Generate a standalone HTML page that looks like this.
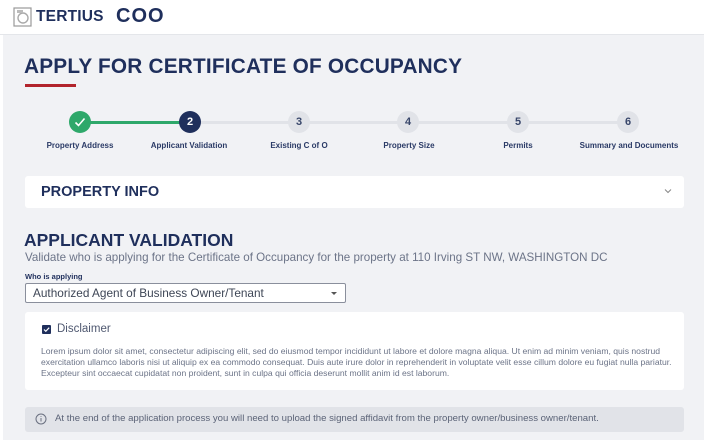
<!DOCTYPE html>
<html><head><meta charset="utf-8"><style>
*{margin:0;padding:0;box-sizing:border-box}
body{width:704px;height:440px;overflow:hidden;background:#fff;font-family:"Liberation Sans",sans-serif;position:relative}
.hdr{position:absolute;left:0;top:0;width:704px;height:35px;background:#fff;border-bottom:1px solid #e4e6ea}
.main{position:absolute;left:3px;top:35px;width:701px;height:405px;background:#f1f2f5}
.abs{position:absolute;white-space:nowrap}
.navy{color:#1f2f5c}
.circ{position:absolute;width:22px;height:22px;border-radius:50%;top:111px;text-align:center;line-height:22px;font-size:11px;font-weight:bold}
.grey{background:#e1e3e8;color:#39476b}
.lbl{position:absolute;top:141px;font-size:8px;font-weight:bold;color:#2a3a66;text-align:center;width:140px}
.card{position:absolute;background:#fff;border-radius:3px}
</style></head><body>
<div class="hdr"></div>
<svg class="abs" style="left:13px;top:7px" width="19" height="20" viewBox="0 0 19 20"><rect x="1" y="1" width="17" height="18" fill="none" stroke="#999" stroke-width="1.2"/><circle cx="10" cy="11" r="5" fill="none" stroke="#aaa" stroke-width="1.4"/><rect x="4" y="3" width="6" height="3" fill="#bbb"/></svg>
<div class="abs navy" style="left:36px;top:8px;font-size:15.5px;font-weight:bold;letter-spacing:0.2px">TERTIUS</div>
<div class="abs navy" style="left:116px;top:5px;font-size:20px;font-weight:bold;letter-spacing:1px">COO</div>
<div class="main"></div>
<div class="abs navy" style="left:24px;top:55px;font-size:20.8px;font-weight:bold;letter-spacing:0.2px">APPLY FOR CERTIFICATE OF OCCUPANCY</div>
<div class="abs" style="left:25px;top:84px;width:51px;height:3px;background:#b2242c"></div>
<div class="abs" style="left:80px;top:121px;width:110px;height:3px;background:#2ea86a"></div>
<div class="abs" style="left:190px;top:121px;width:438px;height:3px;background:#e1e3e8"></div>
<div class="circ" style="left:69px;background:#2ea86a"><svg width="22" height="22" viewBox="0 0 22 22"><path d="M6.5 11.5l3 3 6-7" fill="none" stroke="#fff" stroke-width="1.6"/></svg></div>
<div class="circ" style="left:179px;background:#1f2f5c;color:#fff">2</div>
<div class="circ grey" style="left:288px">3</div>
<div class="circ grey" style="left:397px">4</div>
<div class="circ grey" style="left:507px">5</div>
<div class="circ grey" style="left:617px">6</div>
<div class="lbl" style="left:10px">Property Address</div>
<div class="lbl" style="left:119px">Applicant Validation</div>
<div class="lbl" style="left:229px">Existing C of O</div>
<div class="lbl" style="left:339px">Property Size</div>
<div class="lbl" style="left:448px">Permits</div>
<div class="lbl" style="left:559px">Summary and Documents</div>
<div class="card" style="left:25px;top:176px;width:659px;height:32px"></div>
<div class="abs navy" style="left:41px;top:184px;font-size:14.5px;font-weight:bold">PROPERTY INFO</div>
<svg class="abs" style="left:664px;top:188px" width="8" height="6" viewBox="0 0 8 6"><path d="M1 1.5l3 3 3-3" fill="none" stroke="#888" stroke-width="1"/></svg>
<div class="abs navy" style="left:24px;top:230px;font-size:17.5px;font-weight:bold">APPLICANT VALIDATION</div>
<div class="abs" style="left:25px;top:251px;font-size:11.6px;color:#6c7488">Validate who is applying for the Certificate of Occupancy for the property at 110 Irving ST NW, WASHINGTON DC</div>
<div class="abs navy" style="left:25px;top:272px;font-size:7.5px;font-weight:bold">Who is applying</div>
<div class="abs" style="left:25px;top:283px;width:321px;height:20px;background:#fff;border:1px solid #8a8f9c;border-radius:2px"></div>
<div class="abs" style="left:33px;top:286px;font-size:11.8px;color:#3e4656">Authorized Agent of Business Owner/Tenant</div>
<div class="abs" style="left:331px;top:292px;width:0;height:0;border-left:3px solid transparent;border-right:3px solid transparent;border-top:3px solid #555"></div>
<div class="card" style="left:25px;top:312px;width:659px;height:78px"></div>
<div class="abs" style="left:42px;top:325px;width:9px;height:9px;background:#1f2f5c;border-radius:1px"><svg width="9" height="9" viewBox="0 0 9 9" style="display:block"><path d="M2 4.5l1.8 1.8 3.4-3.6" fill="none" stroke="#fff" stroke-width="1.2"/></svg></div>
<div class="abs" style="left:57px;top:323px;font-size:11.5px;color:#4f5870">Disclaimer</div>
<div class="abs" style="left:41px;top:346px;font-size:8.6px;line-height:11px;color:#6c7488">Lorem ipsum dolor sit amet, consectetur adipiscing elit, sed do eiusmod tempor incididunt ut labore et dolore magna aliqua. Ut enim ad minim veniam, quis nostrud<br>exercitation ullamco laboris nisi ut aliquip ex ea commodo consequat. Duis aute irure dolor in reprehenderit in voluptate velit esse cillum dolore eu fugiat nulla pariatur.<br>Excepteur sint occaecat cupidatat non proident, sunt in culpa qui officia deserunt mollit anim id est laborum.</div>
<div class="abs" style="left:25px;top:407px;width:659px;height:25px;background:#e1e3e8;border-radius:3px"></div>
<svg class="abs" style="left:35px;top:413px" width="12" height="12" viewBox="0 0 12 12"><circle cx="6" cy="6" r="5" fill="none" stroke="#6a7080" stroke-width="1"/><path d="M6 5v3.5M6 3.2v.8" stroke="#6a7080" stroke-width="1"/></svg>
<div class="abs" style="left:55px;top:413px;font-size:9.6px;color:#5b6377">At the end of the application process you will need to upload the signed affidavit from the property owner/business owner/tenant.</div>
</body></html>
